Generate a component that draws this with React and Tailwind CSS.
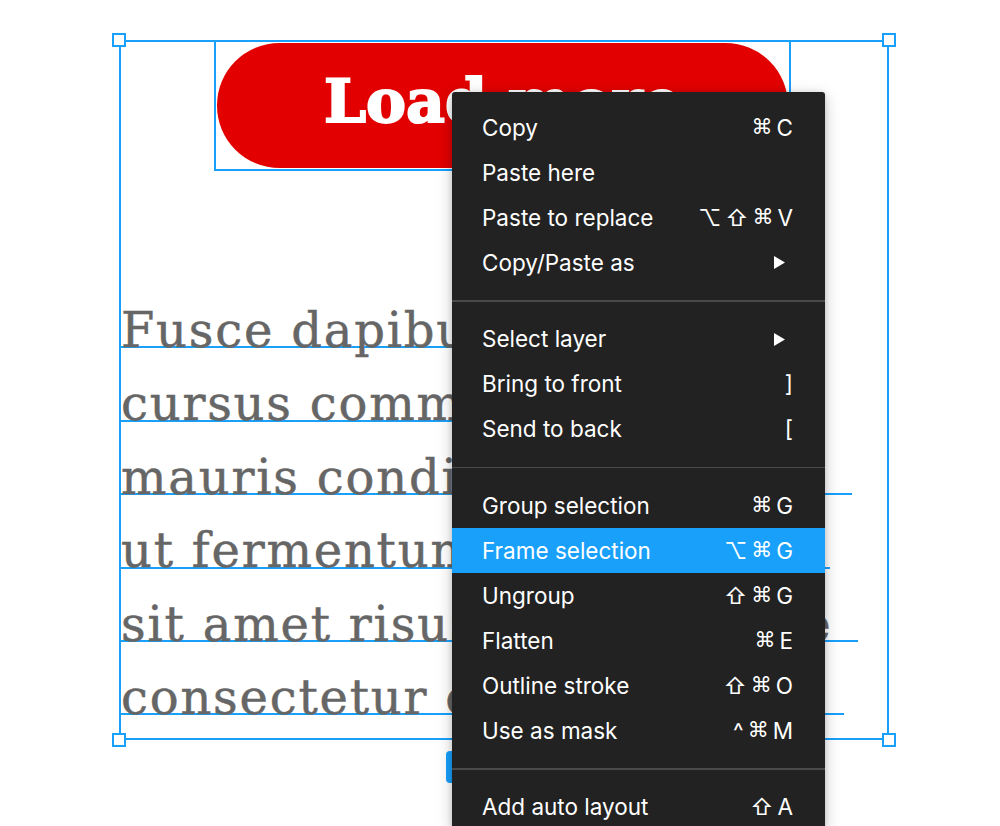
import React from "react";

const lines = [
  { t: "Fusce dapibus, tellus ac", w: "w-[690px]" },
  { t: "cursus commodo, tortor", w: "w-[640px]" },
  { t: "mauris condimentum nibh,", w: "w-[731px]" },
  { t: "ut fermentum massa justo", w: "w-[709px]" },
  { t: "sit amet risus. Sed posuere", w: "w-[737px]" },
  { t: "consectetur est at lobortis.", w: "w-[723px]" },
];

function Arrow() {
  return (
    <svg className="mr-[8px]" width="11" height="13" viewBox="0 0 11 13">
      <path d="M0 0L11 6.5L0 13Z" fill="white" />
    </svg>
  );
}

function Row({ label, keys, arrow, active }) {
  return (
    <div
      className={
        "flex h-[45px] items-center justify-between pl-[30px] pr-[32px] " +
        (active ? "bg-[#18a0fb]" : "")
      }
    >
      <span>{label}</span>
      {arrow ? (
        <Arrow />
      ) : keys ? (
        <span className="flex items-center gap-[4px]">
          {keys.map((k, i) => (
            <span
              key={i}
              className={
                k === "⌘" ? "font-['DejaVu_Sans',sans-serif] text-[21px]" : ""
              }
            >
              {k}
            </span>
          ))}
        </span>
      ) : null}
    </div>
  );
}

function Sep() {
  return (
    <div className="py-[15px]">
      <div className="h-[1.5px] bg-[#4a4a4a]" />
    </div>
  );
}

function Handle({ pos }) {
  return (
    <div
      className={
        "absolute h-[14px] w-[14px] border-2 border-[#18a0fb] bg-white " + pos
      }
    />
  );
}

export default function App() {
  return (
    <div className="relative h-[826px] w-[1000px] overflow-hidden bg-white">
      <div className="pl-[119px] pt-[40px]">
        <div className="relative h-[700px] w-[770px] border-2 border-[#18a0fb]">
          <div className="ml-[93px] -mt-[2px] h-[131px] w-[577px] border-2 border-[#18a0fb] p-[1px]">
            <div className="flex h-full w-full items-center justify-center rounded-full bg-[#e20000] pb-[9px] font-['DejaVu_Serif',serif] text-[60px] font-bold leading-none text-white [-webkit-text-stroke:2px_white]">
              Load more
            </div>
          </div>
          <div className="mt-[104px] font-['DejaVu_Serif',serif] text-[48px] leading-[48px] tracking-[1.8px] text-[#666666] [-webkit-text-stroke:0.5px_#666666]">
            {lines.map((l, i) => (
              <div
                key={i}
                className={"h-[73.4px] border-b-2 border-[#18a0fb] " + l.w}
              >
                <div className="whitespace-nowrap pt-[31px]">{l.t}</div>
              </div>
            ))}
          </div>
          <Handle pos="-left-[9px] -top-[9px]" />
          <Handle pos="-right-[9px] -top-[9px]" />
          <Handle pos="-left-[9px] -bottom-[9px]" />
          <Handle pos="-right-[9px] -bottom-[9px]" />
        </div>
      </div>

      <div className="absolute left-[446px] top-[751px] h-[32px] w-[116px] rounded-[4px] bg-[#18a0fb]" />

      <div className="absolute left-[452px] top-[92px] w-[373px] rounded-[3px] bg-[#222222] pt-[13px] font-['Inter',sans-serif] text-[22.5px] text-white shadow-[0_4px_16px_rgba(0,0,0,0.22),0_1px_5px_rgba(0,0,0,0.15)]">
        <Row label="Copy" keys={["⌘", "C"]} />
        <Row label="Paste here" />
        <Row label="Paste to replace" keys={["⌥", "⇧", "⌘", "V"]} />
        <Row label="Copy/Paste as" arrow />
        <Sep />
        <Row label="Select layer" arrow />
        <Row label="Bring to front" keys={["]"]} />
        <Row label="Send to back" keys={["["]} />
        <Sep />
        <Row label="Group selection" keys={["⌘", "G"]} />
        <Row label="Frame selection" keys={["⌥", "⌘", "G"]} active />
        <Row label="Ungroup" keys={["⇧", "⌘", "G"]} />
        <Row label="Flatten" keys={["⌘", "E"]} />
        <Row label="Outline stroke" keys={["⇧", "⌘", "O"]} />
        <Row label="Use as mask" keys={["^", "⌘", "M"]} />
        <Sep />
        <Row label="Add auto layout" keys={["⇧", "A"]} />
      </div>
    </div>
  );
}
